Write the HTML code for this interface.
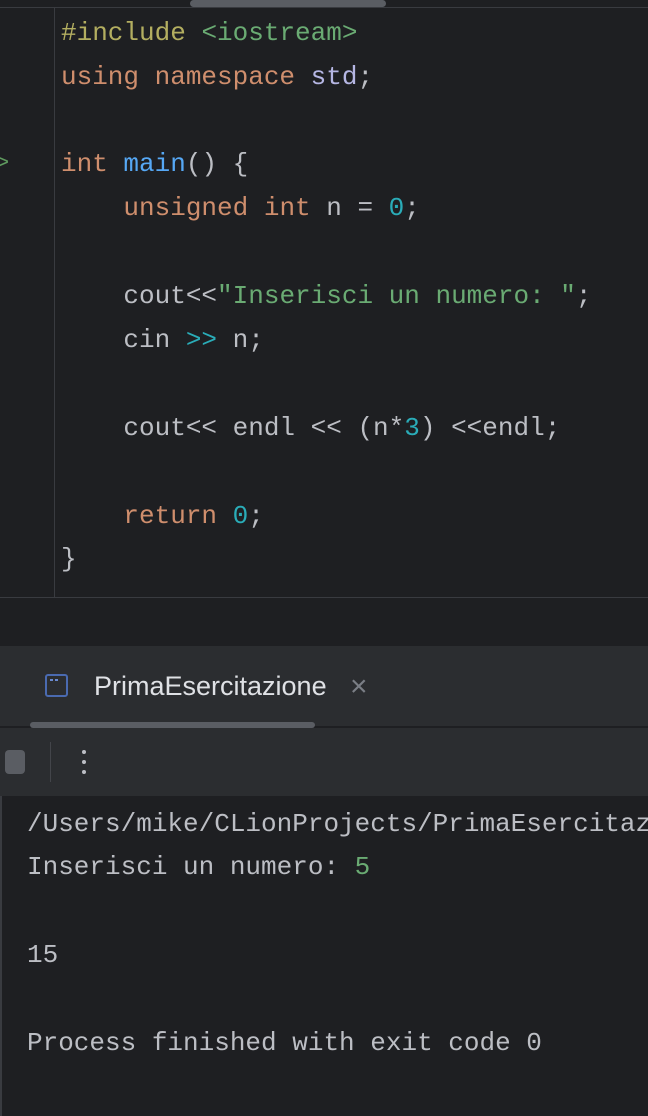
<!DOCTYPE html>
<html><head><meta charset="utf-8"><style>
html,body{margin:0;padding:0;width:648px;height:1116px;overflow:hidden;background:#1e1f22;position:relative}
.m{font-family:"Liberation Mono",monospace;font-size:26px;color:#bcbec4;white-space:pre;position:absolute;line-height:30px}
.k{color:#cf8e6d}.i{color:#b3ae60}.s{color:#6aab73}.p{color:#b5b6e3}.f{color:#56a8f5}.n{color:#2aacb8}
.a{position:absolute}
</style></head><body>
<div class="a" style="left:0;top:7px;width:648px;height:1px;background:#393b40"></div>
<div class="a" style="left:190px;top:0;width:196px;height:7px;border-radius:4px;background:#5a5d63"></div>
<div class="a" style="left:54px;top:8px;width:1px;height:589px;background:#393b40"></div>
<div class="a" style="left:0;top:597px;width:648px;height:1px;background:#393b40"></div>
<div class="m" style="left:-4px;top:149px;color:#5f9a5f;font-size:22px">&gt;</div>
<div class="m" style="left:61px;top:18px"><span class="i">#include</span> <span class="s">&lt;iostream&gt;</span></div>
<div class="m" style="left:61px;top:62px"><span class="k">using namespace</span> <span class="p">std</span>;</div>
<div class="m" style="left:61px;top:149px"><span class="k">int</span> <span class="f">main</span>() {</div>
<div class="m" style="left:61px;top:193px">    <span class="k">unsigned int</span> n = <span class="n">0</span>;</div>
<div class="m" style="left:61px;top:281px">    cout&lt;&lt;<span class="s">"Inserisci un numero: "</span>;</div>
<div class="m" style="left:61px;top:325px">    cin <span class="n">&gt;&gt;</span> n;</div>
<div class="m" style="left:61px;top:413px">    cout&lt;&lt; endl &lt;&lt; (n*<span class="n">3</span>) &lt;&lt;endl;</div>
<div class="m" style="left:61px;top:501px">    <span class="k">return</span> <span class="n">0</span>;</div>
<div class="m" style="left:61px;top:544px">}</div>

<div class="a" style="left:0;top:646px;width:648px;height:150px;background:#2b2d30"></div>
<div class="a" style="left:0;top:726px;width:648px;height:2px;background:#1e1f22"></div>
<div class="a" style="left:30px;top:722px;width:285px;height:6px;border-radius:3px;background:#5a5d63"></div>
<div class="a" style="left:45px;top:674px;width:23px;height:23px;border:2px solid #4a6ab0;border-radius:3px;box-sizing:border-box"></div>
<div class="a" style="left:50px;top:679px;width:3px;height:2px;background:#6a8ad0"></div>
<div class="a" style="left:55px;top:679px;width:3px;height:2px;background:#6a8ad0"></div>
<div class="a" style="left:94px;top:669px;font-family:'Liberation Sans',sans-serif;font-size:27px;color:#dfe1e5;line-height:34px">PrimaEsercitazione</div>
<div class="a" style="left:350px;top:668px;font-family:'Liberation Sans',sans-serif;font-size:30px;color:#7a7e85;line-height:38px">×</div>
<div class="a" style="left:5px;top:750px;width:20px;height:24px;border-radius:4px;background:#5a5d63"></div>
<div class="a" style="left:50px;top:742px;width:1px;height:40px;background:#43454a"></div>
<div class="a" style="left:82px;top:750px;width:4px;height:4px;border-radius:2px;background:#bcbec4"></div>
<div class="a" style="left:82px;top:760px;width:4px;height:4px;border-radius:2px;background:#bcbec4"></div>
<div class="a" style="left:82px;top:770px;width:4px;height:4px;border-radius:2px;background:#bcbec4"></div>
<div class="a" style="left:0;top:796px;width:2px;height:320px;background:#393b40"></div>
<div class="m" style="left:27px;top:809px;width:621px;overflow:hidden">/Users/mike/CLionProjects/PrimaEsercitaz</div>
<div class="m" style="left:27px;top:852px">Inserisci un numero: <span class="s">5</span></div>
<div class="m" style="left:27px;top:940px">15</div>
<div class="m" style="left:27px;top:1028px">Process finished with exit code 0</div>
</body></html>
